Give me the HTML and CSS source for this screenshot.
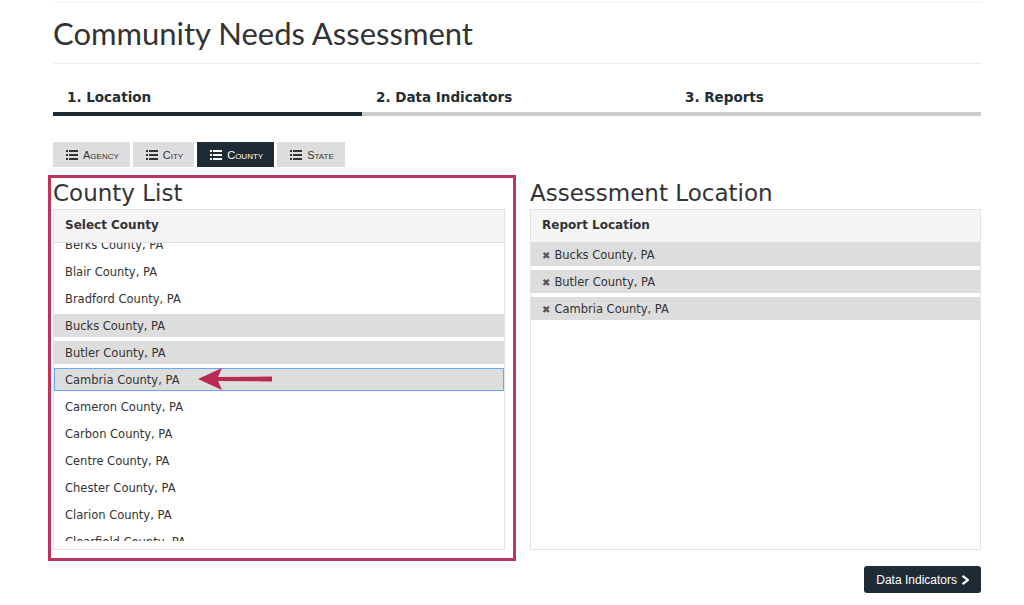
FILE: index.html
```html
<!DOCTYPE html>
<html>
<head>
<meta charset="utf-8">
<link rel="stylesheet" href="styles.css">
</head>
<body>
<div class="page">
  <div class="topline"></div>
  <h1 class="title">Community Needs Assessment</h1>
  <div class="steps">
    <div class="step active">1. Location</div>
    <div class="step">2. Data Indicators</div>
    <div class="step">3. Reports</div>
  </div>
  <div class="tabs">
    <div class="tab"><svg class="ico" viewBox="0 0 12 10"><rect x="0" y="0" width="2" height="2"/><rect x="0" y="4" width="2" height="2"/><rect x="0" y="8" width="2" height="2"/><rect x="3" y="0" width="9" height="2"/><rect x="3" y="4" width="9" height="2"/><rect x="3" y="8" width="9" height="2"/></svg>Agency</div>
    <div class="tab"><svg class="ico" viewBox="0 0 12 10"><rect x="0" y="0" width="2" height="2"/><rect x="0" y="4" width="2" height="2"/><rect x="0" y="8" width="2" height="2"/><rect x="3" y="0" width="9" height="2"/><rect x="3" y="4" width="9" height="2"/><rect x="3" y="8" width="9" height="2"/></svg>City</div>
    <div class="tab on"><svg class="ico" viewBox="0 0 12 10"><rect x="0" y="0" width="2" height="2"/><rect x="0" y="4" width="2" height="2"/><rect x="0" y="8" width="2" height="2"/><rect x="3" y="0" width="9" height="2"/><rect x="3" y="4" width="9" height="2"/><rect x="3" y="8" width="9" height="2"/></svg>County</div>
    <div class="tab"><svg class="ico" viewBox="0 0 12 10"><rect x="0" y="0" width="2" height="2"/><rect x="0" y="4" width="2" height="2"/><rect x="0" y="8" width="2" height="2"/><rect x="3" y="0" width="9" height="2"/><rect x="3" y="4" width="9" height="2"/><rect x="3" y="8" width="9" height="2"/></svg>State</div>
  </div>
  <div class="cols">
    <div class="col left">
      <h2 class="heading">County List</h2>
      <div class="panel">
        <div class="panel-head">Select County</div>
        <div class="list-scroll">
          <ul class="list">
            <li class="item">Berks County, PA</li>
            <li class="item">Blair County, PA</li>
            <li class="item">Bradford County, PA</li>
            <li class="item sel">Bucks County, PA</li>
            <li class="item sel">Butler County, PA</li>
            <li class="item sel focus">Cambria County, PA
              <svg class="arrow" viewBox="0 0 75 24"><path d="M0 12 L24 1 L20 10 L74 9.5 L74 14.5 L20 14 L24 23 Z"/></svg>
            </li>
            <li class="item">Cameron County, PA</li>
            <li class="item">Carbon County, PA</li>
            <li class="item">Centre County, PA</li>
            <li class="item">Chester County, PA</li>
            <li class="item">Clarion County, PA</li>
            <li class="item">Clearfield County, PA</li>
            <li class="item">Clinton County, PA</li>
          </ul>
        </div>
      </div>
      <div class="annot"></div>
    </div>
    <div class="col right">
      <h2 class="heading">Assessment Location</h2>
      <div class="panel">
        <div class="panel-head">Report Location</div>
        <ul class="chosen">
          <li class="chip"><span class="x">✖</span>Bucks County, PA</li>
          <li class="chip"><span class="x">✖</span>Butler County, PA</li>
          <li class="chip"><span class="x">✖</span>Cambria County, PA</li>
        </ul>
      </div>
    </div>
  </div>
  <div class="actions">
    <button class="btn">Data Indicators<svg class="chev" viewBox="0 0 8 10"><path d="M1.5 0.8 L6.8 5 L1.5 9.2" fill="none" stroke="#fff" stroke-width="2.2"/></svg></button>
  </div>
</div>
</body>
</html>
```
FILE: styles.css
```css
* { box-sizing: border-box; }
body {
  margin: 0;
  background: #fff;
  color: #333;
  font-family: "DejaVu Sans", Verdana, sans-serif;
}
.page {
  width: 928px;
  margin-left: 53px;
}
.topline {
  height: 3px;
  border-bottom: 1px solid #f0f0f0;
}
.title {
  margin: 0;
  padding: 12px 0 12px;
  font-family: Lato, sans-serif;
  font-weight: 400;
  font-size: 31px;
  line-height: 36px;
  color: #333;
  border-bottom: 1px solid #eee;
}
.steps {
  display: grid;
  grid-template-columns: 309px 309px 310px;
}
.step {
  padding: 24px 0 6px 14px;
  font-size: 13.5px;
  font-weight: 700;
  line-height: 18px;
  color: #222d36;
  border-bottom: 4px solid #cccccc;
}
.step.active { border-bottom-color: #1f2b34; }
.tabs {
  display: flex;
  gap: 3px;
  margin-top: 26px;
}
.tab {
  display: flex;
  align-items: center;
  height: 25px;
  padding: 0 11px 0 13px;
  background: #dddddd;
  font-family: "Liberation Sans", Arial, sans-serif;
  font-variant: small-caps;
  font-size: 11px;
  color: #333;
}
.tab.on { background: #1f2b34; color: #fff; }
.ico {
  width: 12px;
  height: 10px;
  margin-right: 5px;
  fill: currentColor;
}
.cols {
  display: grid;
  grid-template-columns: 452px 451px;
  column-gap: 25px;
  margin-top: 11px;
}
.col { position: relative; }
.heading {
  margin: 0;
  font-weight: 400;
  font-size: 23px;
  line-height: 31px;
  color: #333;
}
.panel {
  border: 1px solid #e1e1e1;
  height: 341px;
  background: #fff;
}
.panel-head {
  height: 33px;
  padding: 0 11px;
  background: #f5f5f6;
  border-bottom: 1px solid #dedede;
  font-size: 12px;
  font-weight: 700;
  line-height: 31px;
  color: #333;
}
.list-scroll {
  height: 298px;
  overflow: hidden;
}
.list {
  list-style: none;
  margin: -10px 0 0;
  padding: 0;
  display: flex;
  flex-direction: column;
  gap: 4px;
}
.item {
  position: relative;
  flex: none;
  height: 23px;
  padding: 0 11px;
  font-size: 11.5px;
  line-height: 25px;
  color: #333;
}
.item.sel { background: #dddddd; }
.item.focus {
  border: 1px solid #69a9f2;
  line-height: 23px;
  padding-left: 10px;
}
.arrow {
  position: absolute;
  left: 143px;
  top: -2px;
  width: 75px;
  height: 24px;
  fill: #b92a52;
}
.annot {
  position: absolute;
  left: -5px;
  top: -3px;
  right: -11px;
  bottom: -11px;
  border: 3px solid #c0325a;
  pointer-events: none;
}
.chosen {
  list-style: none;
  margin: 0;
  padding: 0;
}
.chip {
  height: 23px;
  margin-bottom: 4px;
  padding: 0 11px;
  background: #dddddd;
  font-size: 11.5px;
  line-height: 24px;
  color: #333;
}
.x {
  font-size: 10px;
  margin-right: 4px;
  color: #555;
}
.actions {
  display: flex;
  justify-content: flex-end;
  margin-top: 16px;
}
.btn {
  display: flex;
  align-items: center;
  height: 27px;
  padding: 0 12px;
  background: #1f2b34;
  color: #fff;
  border: 0;
  border-radius: 3px;
  font-family: "Liberation Sans", Arial, sans-serif;
  font-size: 12px;
}
.chev {
  width: 8px;
  height: 10px;
  margin-left: 4px;
}
```
